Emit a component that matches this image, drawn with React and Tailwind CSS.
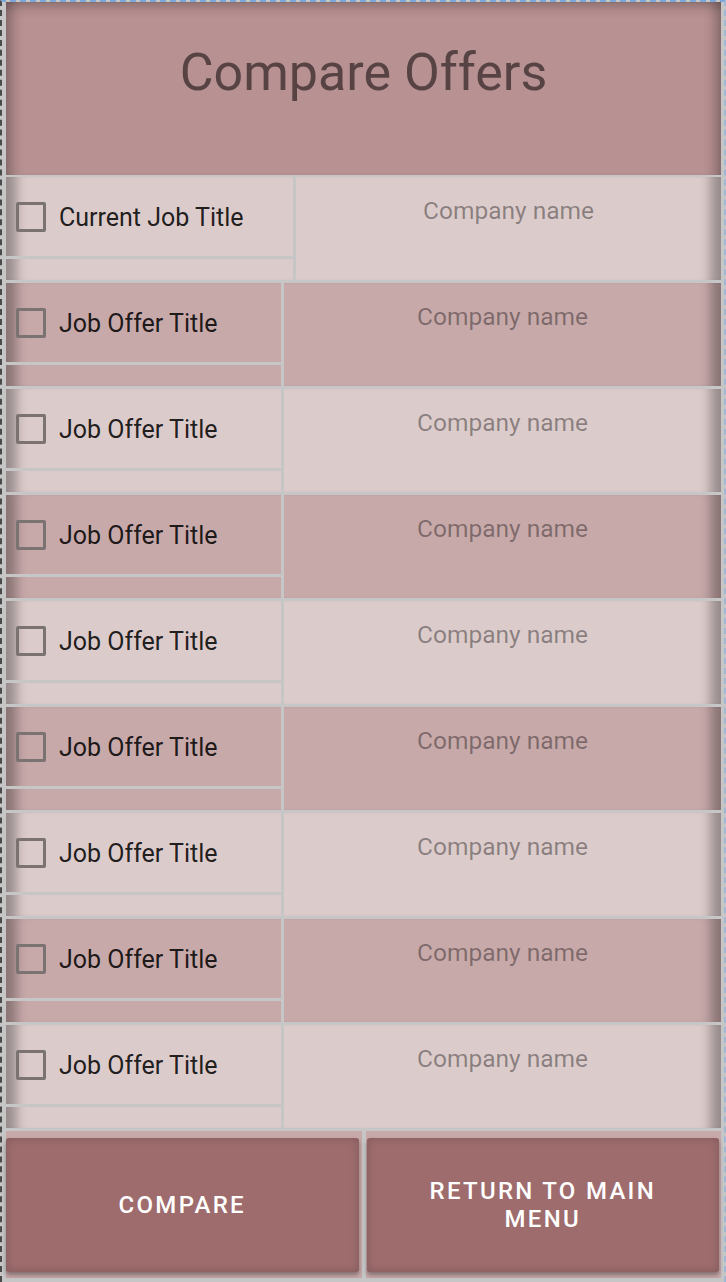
import React from "react";

const rowShadow =
  "shadow-[inset_20px_0_12px_-10px_rgba(0,0,0,0.32),inset_-20px_0_12px_-10px_rgba(0,0,0,0.32)]";

function Checkbox() {
  return (
    <div className="w-[30px] h-[30px] shrink-0 rounded-[2px] border-[3px] border-[#7b7272]" />
  );
}

function Row({ title, dark, first }) {
  return (
    <div
      className={`flex h-[103px] ${dark ? "bg-[#c8a9aa]" : "bg-[#dccbcb]"} ${rowShadow}`}
    >
      <div
        className={`flex flex-col shrink-0 border-r-[3px] border-[#c6c6c6] ${
          first ? "w-[290px]" : "w-[278px]"
        }`}
      >
        <div className="flex items-center h-[82px] border-b-[3px] border-[#c6c6c6] pl-[10px] gap-[13px]">
          <Checkbox />
          <span className="mt-[3px] text-[25px] leading-[28px] text-black/[0.87]">{title}</span>
        </div>
        <div className="flex-1" />
      </div>
      <div className="flex-1 flex justify-center pt-[20px]">
        <span className="text-[24.5px] leading-[28px] text-black/[0.38]">Company name</span>
      </div>
    </div>
  );
}

function Button({ children, className }) {
  return (
    <div className={`flex-1 bg-[#c8a9aa] pt-[7px] pb-[6px] ${className}`}>
      <div className="h-full rounded-[3px] bg-[#9e6c6d] shadow-[inset_0_0_10px_rgba(0,0,0,0.18),0_3px_4px_rgba(0,0,0,0.35)] flex items-center justify-center px-[28px]">
        <span className="text-white text-[24px] leading-[28px] font-medium tracking-[0.095em] text-center uppercase">
          {children}
        </span>
      </div>
    </div>
  );
}

export default function App() {
  const rows = Array.from({ length: 8 }, () => "Job Offer Title");
  return (
    <div className="w-[726px] h-[1282px] bg-[#c6c6c6] border-t-2 border-t-[#7aa6d8] border-l-2 border-l-[#4a4a4a] border-r-2 border-r-[#9fb8d6] border-dashed pl-[4px] pr-[3px] pb-[4px] flex flex-col font-['Roboto',sans-serif] overflow-hidden">
      <div className="h-[173px] shrink-0 bg-[#b89192] shadow-[inset_0_12px_12px_-8px_rgba(0,0,0,0.28),inset_16px_0_12px_-10px_rgba(0,0,0,0.28),inset_-16px_0_12px_-10px_rgba(0,0,0,0.28)] flex justify-center pt-[40px]">
        <h1 className="text-[52px] leading-[61px] text-[#574344]">Compare Offers</h1>
      </div>
      <div className="mt-[2px] flex flex-col gap-[3px]">
        <Row title="Current Job Title" first />
        {rows.map((t, i) => (
          <Row key={i} title={t} dark={i % 2 === 0} />
        ))}
      </div>
      <div className="mt-[3px] h-[147px] flex gap-[4px]">
        <Button className="pr-[3px]">Compare</Button>
        <Button className="pl-[1px] pr-[2px]">Return to main menu</Button>
      </div>
    </div>
  );
}
